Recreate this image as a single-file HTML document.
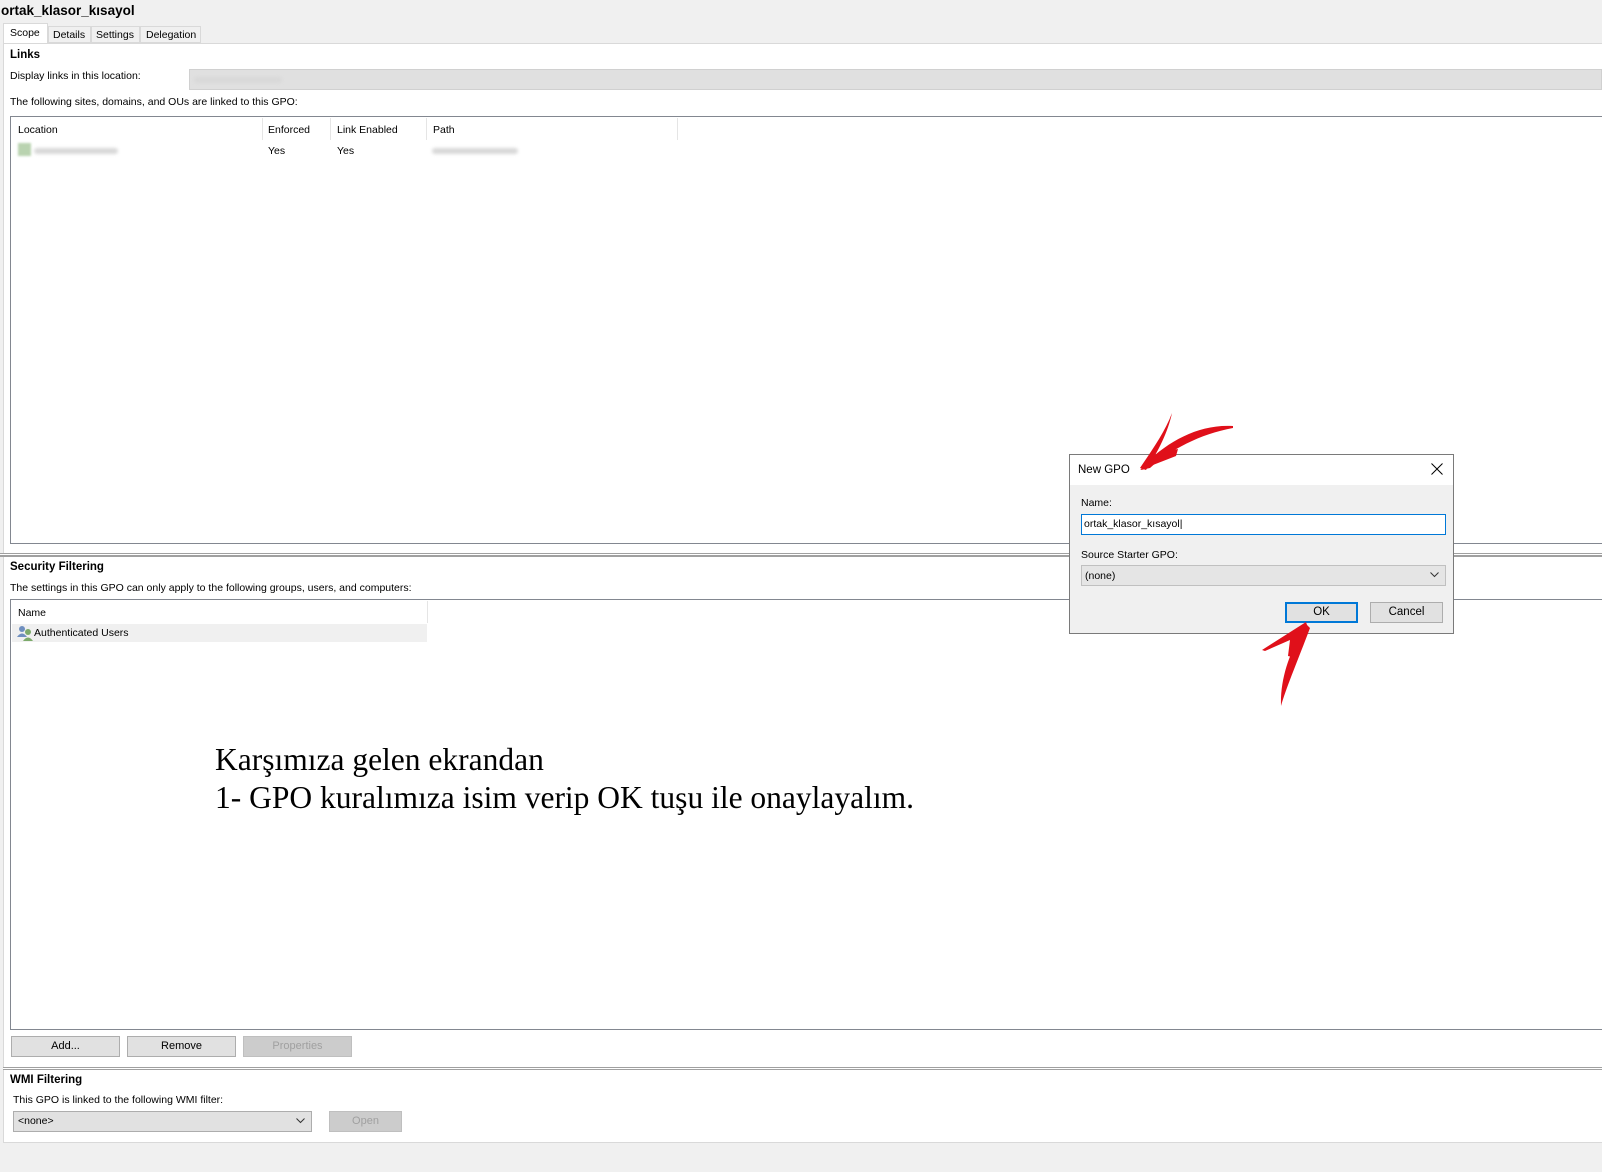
<!DOCTYPE html>
<html><head><meta charset="utf-8"><style>
*{box-sizing:border-box;margin:0;padding:0}
body{width:1602px;height:1172px;background:#f0f0f0;font-family:"Liberation Sans",sans-serif;font-size:10.5px;color:#000;position:relative;overflow:hidden}
.a{position:absolute}
.panel{background:#fff}
.btn{position:absolute;background:#e1e1e1;border:1px solid #adadad;text-align:center;line-height:19px;font-size:11px}
.dis{color:#a0a0a0;background:#ccc;border-color:#bfbfbf}
.blur{background:#d8d8d8;height:6px;border-radius:3px;filter:blur(1.5px)}
.chev{position:absolute;right:6px;top:6px}
</style></head><body>
<div class="a" style="left:1px;top:3px;font-size:13.5px;font-weight:bold">ortak_klasor_kısayol</div>
<div class="a" style="left:3px;top:23px;width:45px;height:21px;background:#fff;border:1px solid #d9d9d9;border-bottom:none;padding:3px 0 0 6px">Scope</div>
<div class="a" style="left:48px;top:26px;width:43px;height:17px;background:#f0f0f0;border:1px solid #d9d9d9;padding:2px 0 0 4px">Details</div>
<div class="a" style="left:91px;top:26px;width:49px;height:17px;background:#f0f0f0;border:1px solid #d9d9d9;padding:2px 0 0 4px">Settings</div>
<div class="a" style="left:140px;top:26px;width:61px;height:17px;background:#f0f0f0;border:1px solid #d9d9d9;padding:2px 0 0 5px">Delegation</div>
<div class="a panel" style="left:3px;top:43px;width:1599px;height:1100px;border-top:1px solid #d9d9d9;border-left:1px solid #d9d9d9;border-bottom:1px solid #d9d9d9"></div>
<div class="a" style="left:10px;top:49px;font-weight:bold;font-size:11.5px">Links</div>
<div class="a" style="left:10px;top:70px">Display links in this location:</div>
<div class="a" style="left:189px;top:69px;width:1413px;height:21px;background:#e0e0e0;border:1px solid #d0d0d0"></div>
<div class="a blur" style="left:194px;top:77px;width:88px"></div>
<div class="a" style="left:10px;top:96px">The following sites, domains, and OUs are linked to this GPO:</div>
<div class="a" style="left:10px;top:116px;width:1592px;height:428px;border:1px solid #828790;border-right:none;background:#fff"></div>
<div class="a" style="left:18px;top:124px">Location</div>
<div class="a" style="left:268px;top:124px">Enforced</div>
<div class="a" style="left:337px;top:124px">Link Enabled</div>
<div class="a" style="left:433px;top:124px">Path</div>
<div class="a" style="left:262px;top:118px;width:1px;height:22px;background:#e5e5e5"></div>
<div class="a" style="left:330px;top:118px;width:1px;height:22px;background:#e5e5e5"></div>
<div class="a" style="left:426px;top:118px;width:1px;height:22px;background:#e5e5e5"></div>
<div class="a" style="left:677px;top:118px;width:1px;height:22px;background:#e5e5e5"></div>
<div class="a" style="left:18px;top:143px;width:13px;height:13px;background:#b9d3b0;filter:blur(1px)"></div>
<div class="a blur" style="left:34px;top:148px;width:84px"></div>
<div class="a" style="left:268px;top:145px">Yes</div>
<div class="a" style="left:337px;top:145px">Yes</div>
<div class="a blur" style="left:432px;top:148px;width:86px"></div>
<div class="a" style="left:0;top:553px;width:1602px;height:4px;border-top:1px solid #a0a0a0;border-bottom:2px solid #a0a0a0;background:#fff"></div>
<div class="a" style="left:10px;top:561px;font-weight:bold;font-size:11.5px">Security Filtering</div>
<div class="a" style="left:10px;top:582px">The settings in this GPO can only apply to the following groups, users, and computers:</div>
<div class="a" style="left:10px;top:599px;width:1592px;height:431px;border:1px solid #828790;border-right:none;background:#fff"></div>
<div class="a" style="left:18px;top:607px">Name</div>
<div class="a" style="left:427px;top:601px;width:1px;height:22px;background:#e5e5e5"></div>
<div class="a" style="left:12px;top:624px;width:415px;height:18px;background:#f0f0f0"></div>
<svg class="a" style="left:17px;top:625px" width="16" height="16"><circle cx="5" cy="4" r="3" fill="#6f8fbf"/><path d="M0,12 Q5,5 10,12Z" fill="#6f8fbf"/><circle cx="11" cy="7" r="3" fill="#7caa6a"/><path d="M6,16 Q11,9 16,16Z" fill="#7caa6a"/></svg>
<div class="a" style="left:34px;top:627px">Authenticated Users</div>
<div class="a" style="left:215px;top:741px;font-family:'Liberation Serif',serif;font-size:31.5px;line-height:38px">Karşımıza gelen ekrandan<br>1- GPO kuralımıza isim verip OK tuşu ile onaylayalım.</div>
<div class="btn" style="left:11px;top:1036px;width:109px;height:21px">Add...</div>
<div class="btn" style="left:127px;top:1036px;width:109px;height:21px">Remove</div>
<div class="btn dis" style="left:243px;top:1036px;width:109px;height:21px">Properties</div>
<div class="a" style="left:3px;top:1067px;width:1599px;height:3px;border-top:1px solid #a0a0a0;border-bottom:1px solid #a0a0a0;background:#fff"></div>
<div class="a" style="left:10px;top:1074px;font-weight:bold;font-size:11.5px">WMI Filtering</div>
<div class="a" style="left:13px;top:1094px">This GPO is linked to the following WMI filter:</div>
<div class="a" style="left:13px;top:1111px;width:299px;height:21px;background:#e1e1e1;border:1px solid #adadad;padding:3px 4px">&lt;none&gt;<svg class="chev" width="9" height="6"><path d="M0.5,0.5 L4.5,4.5 L8.5,0.5" fill="none" stroke="#333"/></svg></div>
<div class="btn dis" style="left:329px;top:1111px;width:73px;height:21px">Open</div>
<!-- dialog -->
<div class="a" style="left:1069px;top:454px;width:385px;height:180px;background:#f0f0f0;border:1px solid #7a7a7a">
 <div style="height:30px;background:#fff;padding:9px 0 0 8px;font-size:11.5px">New GPO</div>
 <svg class="a" style="right:10px;top:8px" width="12" height="12"><path d="M0.5,0.5 L11.5,11.5 M11.5,0.5 L0.5,11.5" stroke="#000" stroke-width="1"/></svg>
 <div class="a" style="left:11px;top:42px">Name:</div>
 <div class="a" style="left:11px;top:59px;width:365px;height:21px;background:#fff;border:1px solid #0078d7;padding:3px 2px">ortak_klasor_kısayol|</div>
 <div class="a" style="left:11px;top:94px">Source Starter GPO:</div>
 <div class="a" style="left:11px;top:110px;width:365px;height:21px;background:#e5e5e5;border:1px solid #c0c0c0;padding:4px 3px">(none)<svg class="chev" width="9" height="6"><path d="M0.5,0.5 L4.5,4.5 L8.5,0.5" fill="none" stroke="#333"/></svg></div>
 <div class="btn" style="left:215px;top:147px;width:73px;height:21px;border:2px solid #0078d7;line-height:17px;font-size:11.5px">OK</div>
 <div class="btn" style="left:300px;top:147px;width:73px;height:21px;font-size:11.5px">Cancel</div>
</div>
<svg class="a" style="left:0;top:0" width="1602" height="1172">
<g fill="#e0101a">
<path d="M1233,426 C1200,424 1170,440 1146,463 L1141,470 L1150,468 C1170,450 1200,434 1233,428Z"/>
<path d="M1172,413 C1165,432 1152,450 1140,468 L1146,470 C1158,452 1168,432 1172,413Z"/>
<path d="M1140,470 L1176,456 L1178,449 L1160,452Z"/>
<path d="M1306,624 C1292,648 1280,675 1281,706 C1286,688 1298,660 1310,628Z"/>
<path d="M1306,622 L1262,650 L1265,651 L1290,640 L1288,656 L1296,658 L1308,628Z"/>
</g>
</svg>
</body></html>
